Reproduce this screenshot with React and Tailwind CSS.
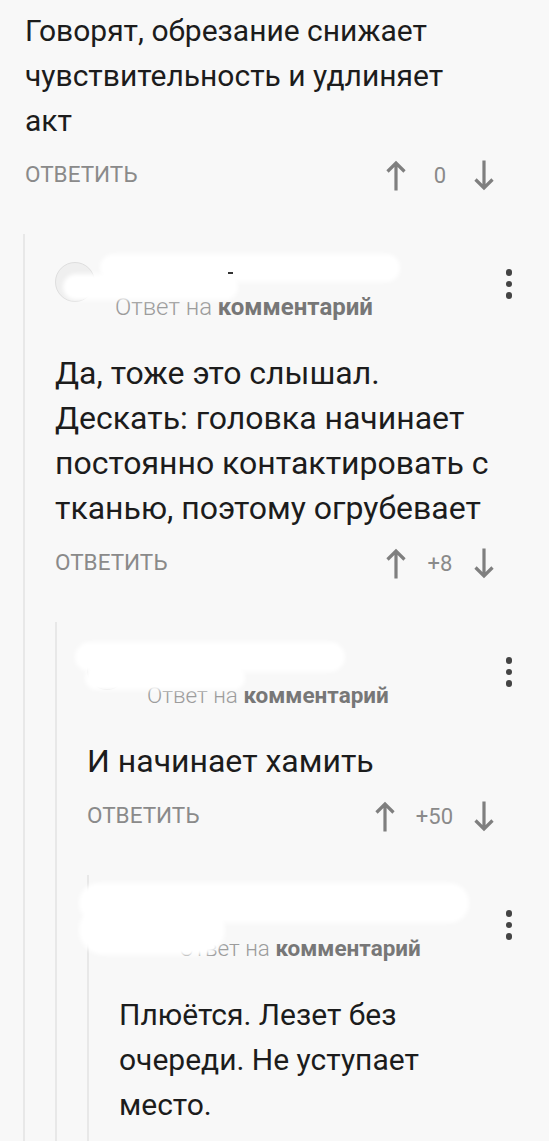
import React from 'react';

const thread = {
  lines: ['Говорят, обрезание снижает', 'чувствительность и удлиняет', 'акт'],
  score: '0',
  reply: {
    lines: ['Да, тоже это слышал.', 'Дескать: головка начинает', 'постоянно контактировать с', 'тканью, поэтому огрубевает'],
    size: 'text-[32px]',
    sub: 'text-[24px]',
    score: '+8',
    blobs: [
      'left-[45px] top-[20px] w-[300px] h-[28px]',
      'left-[8px] top-[40px] w-[175px] h-[26px]',
    ],
    dash: true,
    reply: {
      lines: ['И начинает хамить'],
      size: 'text-[32px]',
      sub: 'text-[22.5px]',
      score: '+50',
      blobs: [
        'left-[-12px] top-[20px] w-[270px] h-[30px]',
        'left-[-2px] top-[44px] w-[160px] h-[24px]',
      ],
      reply: {
        lines: ['Плюётся. Лезет без', 'очереди. Не уступает', 'место.'],
        size: 'text-[30px]',
        sub: 'text-[22.5px]',
        blobs: [
          'left-[-40px] top-[8px] w-[390px] h-[40px]',
          'left-[-40px] top-[30px] w-[146px] h-[50px]',
        ],
      },
    },
  },
};

const Arrow = ({ down }) => (
  <svg
    width="22"
    height="31"
    viewBox="0 0 22 31"
    fill="none"
    stroke="#7f7f7f"
    strokeWidth="3.2"
    className={down ? 'rotate-180' : ''}
  >
    <path d="M11 30.5V3M2.5 11.5L11 3l8.5 8.5" />
  </svg>
);

const Kebab = () => (
  <div className="mt-[7px] flex flex-col items-center gap-[5px]">
    <span className="h-[6.5px] w-[6.5px] rounded-full bg-[#444]" />
    <span className="h-[6.5px] w-[6.5px] rounded-full bg-[#444]" />
    <span className="h-[6.5px] w-[6.5px] rounded-full bg-[#444]" />
  </div>
);

const Actions = ({ score }) => (
  <div className="mt-[14px] flex h-[36px] items-center justify-between pr-[17px]">
    <span className="text-[22.5px] text-[#8a8a8a]">ОТВЕТИТЬ</span>
    <div className="flex items-center gap-[20px]">
      <Arrow />
      <span className="min-w-[26px] text-center text-[22px] text-[#8a8a8a]">{score}</span>
      <Arrow down />
    </div>
  </div>
);

const Body = ({ lines, size = 'text-[30px]' }) => (
  <div className={`${size} leading-[45px] text-[#1c1c1c]`}>
    {lines.map((l) => (
      <div key={l} className="whitespace-nowrap">{l}</div>
    ))}
  </div>
);

const Reply = ({ c }) => (
  <div className={`mt-[41px] border-l-2 border-[#e8e8e8] pl-[30px] ${c.reply ? '' : 'pb-[30px]'}`}>
    <div className="relative flex items-start justify-between pt-[28px]">
      <div className="flex">
        <div className="h-10 w-10 rounded-full border border-[#dedede] bg-[#efefef]" />
        <div className="ml-[20px] flex flex-col">
          <div className="h-[33px]" />
          <div className={`${c.sub} leading-[24px] whitespace-nowrap`}>
            <span className="font-light text-[#9c9c9c]">Ответ на </span>
            <span className="font-bold text-[#777]">комментарий</span>
          </div>
        </div>
      </div>
      <Kebab />
      {c.blobs.map((b) => (
        <div key={b} className={`absolute rounded-full bg-white blur-[2px] ${b}`} />
      ))}
      {c.dash && <div className="absolute left-[173px] top-[38px] h-[2px] w-[5px] bg-[#333]" />}
    </div>
    <div className="mt-[32px]">
      <Body lines={c.lines} size={c.size} />
    </div>
    {c.score && <Actions score={c.score} />}
    {c.reply && <Reply c={c.reply} />}
  </div>
);

export default function App() {
  return (
    <div className="h-[1141px] w-full overflow-hidden bg-[#f8f8f8] pl-[23px] pr-[37px] pt-[8px] font-['Roboto','Liberation_Sans',sans-serif]">
      <div className="pl-[2px]">
        <Body lines={thread.lines} />
        <Actions score={thread.score} />
      </div>
      <Reply c={thread.reply} />
    </div>
  );
}
